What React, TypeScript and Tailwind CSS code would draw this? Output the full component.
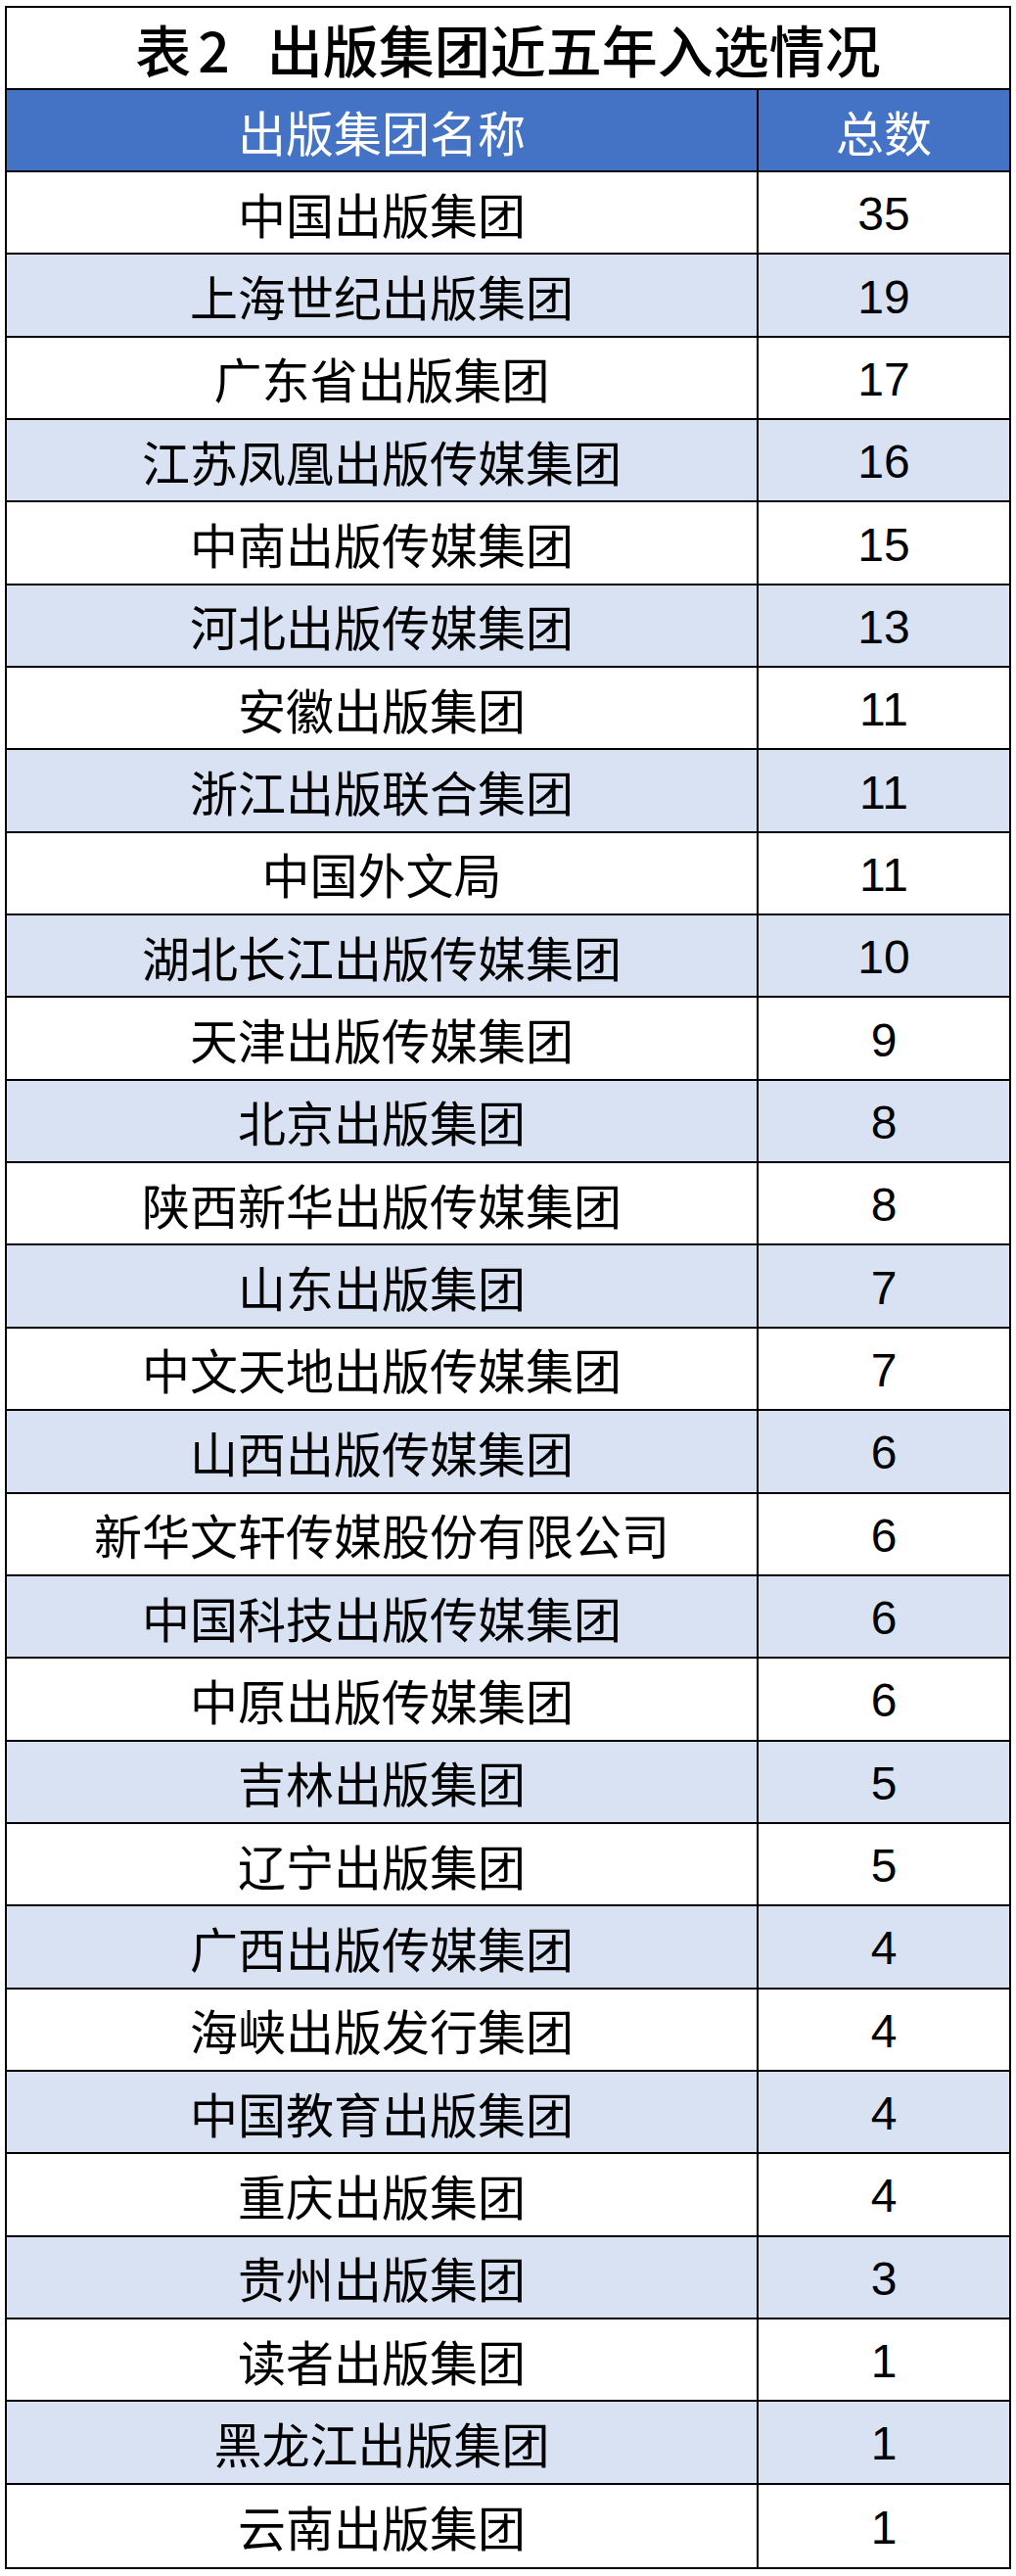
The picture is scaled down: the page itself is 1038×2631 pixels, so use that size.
const rows: [string, number][] = [
  ['中国出版集团', 35],
  ['上海世纪出版集团', 19],
  ['广东省出版集团', 17],
  ['江苏凤凰出版传媒集团', 16],
  ['中南出版传媒集团', 15],
  ['河北出版传媒集团', 13],
  ['安徽出版集团', 11],
  ['浙江出版联合集团', 11],
  ['中国外文局', 11],
  ['湖北长江出版传媒集团', 10],
  ['天津出版传媒集团', 9],
  ['北京出版集团', 8],
  ['陕西新华出版传媒集团', 8],
  ['山东出版集团', 7],
  ['中文天地出版传媒集团', 7],
  ['山西出版传媒集团', 6],
  ['新华文轩传媒股份有限公司', 6],
  ['中国科技出版传媒集团', 6],
  ['中原出版传媒集团', 6],
  ['吉林出版集团', 5],
  ['辽宁出版集团', 5],
  ['广西出版传媒集团', 4],
  ['海峡出版发行集团', 4],
  ['中国教育出版集团', 4],
  ['重庆出版集团', 4],
  ['贵州出版集团', 3],
  ['读者出版集团', 1],
  ['黑龙江出版集团', 1],
  ['云南出版集团', 1],
]

const cjk = "font-['Noto_Sans_CJK_SC',sans-serif]"

export default function App() {
  return (
    <div className="min-h-[2631px] bg-white pl-[5px] pt-[6px]">
      <div className="w-[1028px] border-2 border-black text-black">
        <div
          className={`flex h-[84px] items-center justify-center border-b-2 border-black text-[57px] font-medium leading-none ${cjk}`}
        >
          <span>表</span>
          <span className="ml-[7px]">2</span>
          <span className="ml-[38px]">出版集团近五年入选情况</span>
        </div>

        <div className="grid h-[84px] grid-cols-[768px_1fr] border-b-2 border-black bg-[#4472c4] text-white">
          <div
            className={`flex items-center justify-center border-r-2 border-black text-[49px] leading-none ${cjk}`}
          >
            出版集团名称
          </div>
          <div
            className={`flex items-center justify-center text-[49px] leading-none ${cjk}`}
          >
            总数
          </div>
        </div>

        {rows.map(([name, total], i) => (
          <div
            key={name}
            className={`grid h-[84.35px] grid-cols-[768px_1fr] border-b-2 border-black last:border-b-0 ${
              i % 2 === 1 ? 'bg-[#d9e2f3]' : 'bg-white'
            }`}
          >
            <div
              className={`flex items-center justify-center border-r-2 border-black text-[49px] leading-none ${cjk}`}
            >
              {name}
            </div>
            <div className="flex items-center justify-center pt-[4px] font-['Liberation_Sans',Arial,sans-serif] text-[48px] leading-none">
              {total}
            </div>
          </div>
        ))}
      </div>
    </div>
  )
}
